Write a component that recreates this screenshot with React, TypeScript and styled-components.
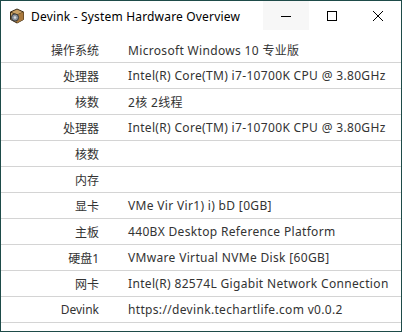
import styled, { createGlobalStyle } from 'styled-components';

const GlobalStyle = createGlobalStyle`
  html, body {
    margin: 0;
    padding: 0;
    background: #ffffff;
  }
  * {
    box-sizing: border-box;
  }
`;

interface InfoRow {
  label: string;
  value: string;
}

const rows: InfoRow[] = [
  { label: '操作系统', value: 'Microsoft Windows 10 专业版' },
  { label: '处理器', value: 'Intel(R) Core(TM) i7-10700K CPU @ 3.80GHz' },
  { label: '核数', value: '2核 2线程' },
  { label: '处理器', value: 'Intel(R) Core(TM) i7-10700K CPU @ 3.80GHz' },
  { label: '核数', value: '' },
  { label: '内存', value: '' },
  { label: '显卡', value: 'VMe Vir Vir1) i) bD [0GB]' },
  { label: '主板', value: '440BX Desktop Reference Platform' },
  { label: '硬盘1', value: 'VMware Virtual NVMe Disk [60GB]' },
  { label: '网卡', value: 'Intel(R) 82574L Gigabit Network Connection' },
  { label: 'Devink', value: 'https://devink.techartlife.com v0.0.2' },
];

const AppIcon = () => (
  <svg width='16' height='16' viewBox='0 0 16 16'>
    <path d='M8 1 L14.5 4 L14.5 11.5 L8 15 L1.5 11.5 L1.5 4 Z' fill='#c9a064' stroke='#3a2a14' strokeWidth='1' />
    <path d='M1.5 4 L8 7 L14.5 4 M8 7 L8 15' fill='none' stroke='#3a2a14' strokeWidth='0.8' />
    <path d='M8 7 L14.5 4 L14.5 11.5 L8 15 Z' fill='#a9793d' />
    <circle cx='6' cy='9.5' r='3.6' fill='#8b9199' stroke='#2d3036' strokeWidth='0.9' />
    <circle cx='6' cy='9.5' r='1.3' fill='#d7dadf' />
  </svg>
);

const App = () => {
  return (
    <>
      <GlobalStyle />
      <Window>
        <TitleBar>
          <TitleLeft>
            <AppIcon />
            <TitleText>Devink - System Hardware Overview</TitleText>
          </TitleLeft>
          <Controls>
            <ControlButton $hover>
              <svg width='10' height='10' viewBox='0 0 10 10'>
                <path d='M0 5.5 H10' stroke='#000' strokeWidth='1' />
              </svg>
            </ControlButton>
            <ControlButton>
              <svg width='10' height='10' viewBox='0 0 10 10'>
                <rect x='0.5' y='0.5' width='9' height='9' fill='none' stroke='#000' strokeWidth='1' />
              </svg>
            </ControlButton>
            <ControlButton>
              <svg width='10' height='10' viewBox='0 0 10 10'>
                <path d='M0 0 L10 10 M10 0 L0 10' stroke='#000' strokeWidth='1' />
              </svg>
            </ControlButton>
          </Controls>
        </TitleBar>
        <Table>
          {rows.map((row, index) => (
            <Row key={index}>
              <Label>{row.label}</Label>
              <Value>{row.value}</Value>
            </Row>
          ))}
        </Table>
      </Window>
    </>
  );
};

const Window = styled.div`
  width: 402px;
  height: 332px;
  border: 1px solid #1e4b49;
  background: #ffffff;
  display: flex;
  flex-direction: column;
  overflow: hidden;
`;

const TitleBar = styled.div`
  height: 29px;
  display: flex;
  align-items: stretch;
  justify-content: space-between;
`;

const TitleLeft = styled.div`
  display: flex;
  align-items: center;
  column-gap: 6px;
  padding-left: 8px;
  padding-top: 1px;
`;

const TitleText = styled.span`
  font-family: 'Noto Sans', 'Open Sans', sans-serif;
  font-size: 12px;
  letter-spacing: 0.18px;
  color: #000000;
`;

const Controls = styled.div`
  display: flex;
`;

const ControlButton = styled.div<{ $hover?: boolean }>`
  width: 46px;
  display: flex;
  align-items: center;
  justify-content: center;
  background: ${({ $hover }) => ($hover ? '#f7f7f7' : 'transparent')};
`;

const Table = styled.div`
  display: flex;
  flex-direction: column;
  padding-top: 7px;
`;

const Row = styled.div`
  display: grid;
  grid-template-columns: 98px 1fr;
  column-gap: 29px;
  align-items: center;
  height: 26px;
  border-bottom: 1px solid #d4d4d4;
  font-family: 'Noto Sans', 'Noto Sans CJK SC', sans-serif;
  font-size: 12px;
  color: #333333;
`;

const Label = styled.span`
  text-align: right;
  white-space: nowrap;
`;

const Value = styled.span`
  white-space: nowrap;
  letter-spacing: 0.33px;
`;

export default App;
